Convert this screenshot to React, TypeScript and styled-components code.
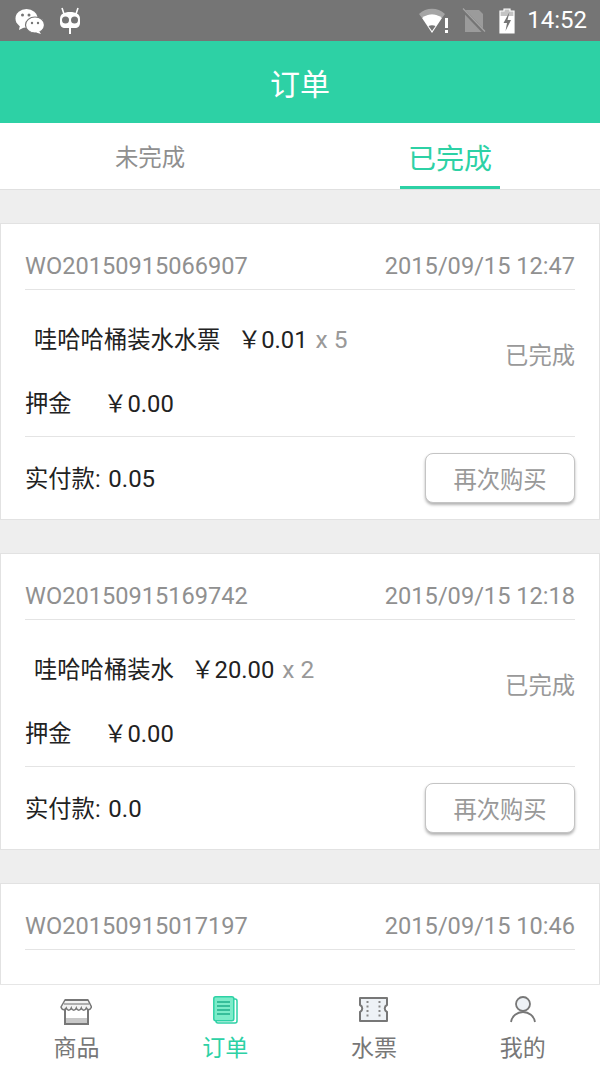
import { createGlobalStyle, styled } from "styled-components"

const GREEN = "#2dd1a5"
const BAR = "#757575"

const orders = [
  { no: "WO20150915066907", date: "2015/09/15 12:47", name: "哇哈哈桶装水水票", price: "￥0.01", qty: "x 5", paid: "0.05" },
  { no: "WO20150915169742", date: "2015/09/15 12:18", name: "哇哈哈桶装水", price: "￥20.00", qty: "x 2", paid: "0.0" },
]

export default function App() {
  return (
    <SPage>
      <GlobalStyle />
      <SStatusBar>
        <SStatusGroup>
          <WechatIcon />
          <RobotIcon />
        </SStatusGroup>
        <SStatusGroup>
          <WifiIcon />
          <SimIcon />
          <BatteryIcon />
          <SClock>14:52</SClock>
        </SStatusGroup>
      </SStatusBar>
      <SHeader>订单</SHeader>
      <STabs>
        <STab>未完成</STab>
        <STab $active>已完成<STabLine /></STab>
      </STabs>
      <SList>
        {orders.map((order) => (
          <SCard key={order.no}>
            <SCardHead>
              <span>{order.no}</span>
              <span>{order.date}</span>
            </SCardHead>
            <SBody>
              <SBodyLeft>
                <SItem>
                  <span>{order.name}</span>
                  <SPrice>{order.price}</SPrice>
                  <SQty>{order.qty}</SQty>
                </SItem>
                <SDeposit>
                  <span>押金</span>
                  <SLatin>￥0.00</SLatin>
                </SDeposit>
              </SBodyLeft>
              <SState>已完成</SState>
            </SBody>
            <SFoot>
              <SPaid>实付款: <SPaidValue>{order.paid}</SPaidValue></SPaid>
              <SButton>再次购买</SButton>
            </SFoot>
          </SCard>
        ))}
        <SCard>
          <SCardHead>
            <span>WO20150915017197</span>
            <span>2015/09/15 10:46</span>
          </SCardHead>
        </SCard>
      </SList>
      <SNav>
        <SNavItem><ShopIcon />商品</SNavItem>
        <SNavItem $active><OrderIcon />订单</SNavItem>
        <SNavItem><TicketIcon />水票</SNavItem>
        <SNavItem><UserIcon />我的</SNavItem>
      </SNav>
    </SPage>
  )
}

function WechatIcon() {
  return (
    <svg width="30" height="28" viewBox="0 0 30 28">
      <ellipse cx="11.500" cy="12.500" rx="11" ry="9.500" fill="#fff" />
      <path d="M5 19l-1 5 6-3z" fill="#fff" />
      <ellipse cx="20" cy="19" rx="9.500" ry="8" fill="#fff" stroke={BAR} strokeWidth="1.200" />
      <path d="M24 25l2 3-5-1.500z" fill="#fff" />
      <circle cx="7.500" cy="9" r="1.500" fill={BAR} />
      <circle cx="14" cy="9" r="1.500" fill={BAR} />
      <circle cx="17" cy="17" r="1.200" fill={BAR} />
      <circle cx="23" cy="17" r="1.200" fill={BAR} />
    </svg>
  )
}

function RobotIcon() {
  return (
    <svg width="22" height="28" viewBox="0 0 22 28">
      <path d="M3 2l2 6M19 2l-2 6" stroke="#fff" strokeWidth="1.600" />
      <path d="M1 13c0-5 4-7 10-7s10 2 10 7v4c0 3-2 5-5 5H6c-3 0-5-2-5-5z" fill="#fff" />
      <circle cx="6.500" cy="14" r="3.500" fill={BAR} />
      <circle cx="15.500" cy="14" r="3.500" fill={BAR} />
      <rect x="10" y="22" width="2" height="6" fill="#fff" />
    </svg>
  )
}

function WifiIcon() {
  return (
    <svg width="32" height="28" viewBox="0 0 32 28">
      <path d="M1 8C8 1 20 1 27 8l-3 4C18 7 10 7 4 12z" fill="#a5a5a5" />
      <path d="M4 12c6-5 14-5 20 0L14 27z" fill="#fff" />
      <path d="M14 25l-3.500-5c2-1 5-1 7 0z" fill={BAR} />
      <rect x="27" y="12" width="3" height="10" fill="#fff" />
      <rect x="27" y="24" width="3" height="3" fill="#fff" />
    </svg>
  )
}

function SimIcon() {
  return (
    <svg width="26" height="28" viewBox="0 0 26 28">
      <path d="M4 4h14l4 4v18H4z" fill="#9b9b9b" />
      <path d="M1 3l22 23" stroke={BAR} strokeWidth="3.500" />
      <path d="M2 2.500l22 23" stroke="#a5a5a5" strokeWidth="1.200" />
    </svg>
  )
}

function BatteryIcon() {
  return (
    <svg width="18" height="28" viewBox="0 0 18 28">
      <path d="M6 3h6v2h4v22H2V5h4z" fill="#c4c4c4" stroke="#fff" strokeWidth="1.200" />
      <rect x="2" y="10" width="14" height="17" fill="#fff" />
      <path d="M11.500 6L5.500 17h3.500L7.500 25l5.500-11H9.500z" fill={BAR} />
    </svg>
  )
}

function ShopIcon() {
  return (
    <svg width="32" height="32" viewBox="0 0 32 32">
      <rect x="5" y="24" width="23" height="6" fill="#c8c8c8" />
      <path d="M5 15v15h23V15" fill="none" stroke="#777" strokeWidth="2" />
      <path d="M5 6h23l3.500 7c-2 4-4 3-5.200 1-1 3-4 3-5 0-1 3-4 3-5 0-1 3-4 3-5 0-1 3-4 3-5 0-1.200 2-3.800 3-5.300-1z" fill="#f2f2f2" stroke="#777" strokeWidth="1.500" />
      <path d="M5 6h23" stroke="#777" strokeWidth="2" />
      <path d="M4 10h25" stroke="#999" strokeWidth="1.500" />
    </svg>
  )
}

function OrderIcon() {
  return (
    <svg width="32" height="32" viewBox="0 0 32 32">
      <rect x="7" y="5" width="21" height="24" rx="2" fill="#fff" stroke={GREEN} strokeWidth="1.500" />
      <rect x="4.800" y="2.800" width="20" height="24" rx="2" fill="#7cecc9" stroke={GREEN} strokeWidth="1.500" />
      <path d="M8 8h13M8 12h13M8 16h13M8 20h13" stroke="#1fae8a" strokeWidth="1.500" />
    </svg>
  )
}

function TicketIcon() {
  return (
    <svg width="32" height="32" viewBox="0 0 32 32">
      <path d="M2 4h27v7c-3 1.500-3 5.500 0 7v9H2v-9c3-1.500 3-5.500 0-7z" fill="#eef2f6" stroke="#777" strokeWidth="2" strokeLinejoin="round" />
      <path d="M9.500 7v17M21.500 7v17" stroke="#888" strokeWidth="2" strokeDasharray="2 2.500" />
    </svg>
  )
}

function UserIcon() {
  return (
    <svg width="32" height="32" viewBox="0 0 32 32">
      <circle cx="16" cy="10" r="7" fill="#eef2f6" stroke="#777" strokeWidth="1.800" />
      <path d="M4 28c1-6 6-10 12-10s11 4 12 10" fill="none" stroke="#777" strokeWidth="1.800" />
    </svg>
  )
}

const GlobalStyle = createGlobalStyle`
  html, body {
    margin: 0;
    padding: 0;
    background: #eeeeee;
  }
  body {
    font-family: Roboto, "Noto Sans CJK SC", sans-serif;
  }
`

const SPage = styled.div`
  width: 600px;
  height: 1067px;
  display: flex;
  flex-direction: column;
  overflow: hidden;
`
const SStatusBar = styled.div`
  height: 41px;
  flex: none;
  box-sizing: border-box;
  background: ${BAR};
  display: flex;
  justify-content: space-between;
  align-items: center;
  padding: 0 13px 1px 15px;
`
const SStatusGroup = styled.div`
  display: flex;
  align-items: center;
  gap: 14px;
  &:last-child {
    gap: 11px;
  }
`
const SClock = styled.span`
  color: #fff;
  font-size: 24px;
`
const SHeader = styled.div`
  height: 82px;
  flex: none;
  background: ${GREEN};
  color: #fff;
  font-size: 30px;
  display: flex;
  align-items: center;
  justify-content: center;
`
const STabs = styled.div`
  height: 67px;
  flex: none;
  display: grid;
  grid-template-columns: 1fr 1fr;
  background: #fff;
  border-bottom: 1px solid #e0e0e0;
  box-sizing: border-box;
`
const STab = styled.div<{ $active?: boolean }>`
  position: relative;
  display: flex;
  align-items: center;
  justify-content: center;
  padding: ${(p) => (p.$active ? "1px 0 0" : "0")};
  font-size: ${(p) => (p.$active ? "28px" : "23.400px")};
  color: ${(p) => (p.$active ? GREEN : "#8f8f8f")};
`
const STabLine = styled.i`
  position: absolute;
  bottom: 0;
  left: 100px;
  width: 100px;
  height: 3px;
  background: ${GREEN};
`
const SList = styled.div`
  flex: 1;
  min-height: 0;
  overflow: hidden;
  padding-top: 33px;
  display: flex;
  flex-direction: column;
  gap: 33px;
`
const SCard = styled.div`
  flex: none;
  box-sizing: border-box;
  background: #fff;
  border: 1px solid #e2e2e2;
  padding: 0 24px;
  &:last-child {
    height: 200px;
  }
`
const SCardHead = styled.div`
  height: 66px;
  box-sizing: border-box;
  display: flex;
  justify-content: space-between;
  align-items: flex-end;
  padding-bottom: 8px;
  border-bottom: 1px solid #e4e4e4;
  font-size: 23.600px;
  line-height: 30px;
  color: #909090;
`
const SBody = styled.div`
  height: 147px;
  box-sizing: border-box;
  display: flex;
  justify-content: space-between;
  border-bottom: 1px solid #e4e4e4;
`
const SBodyLeft = styled.div`
  display: flex;
  flex-direction: column;
`
const SItem = styled.div`
  display: flex;
  align-items: baseline;
  height: 34px;
  margin-top: 30px;
  padding-left: 9px;
  font-size: 23.300px;
  color: #222;
`
const SLatin = styled.span`
  font-size: 23.800px;
`
const SPrice = styled(SLatin)`
  margin-left: 17px;
`
const SQty = styled.span`
  margin-left: 8px;
  font-size: 24.500px;
  color: #999;
`
const SDeposit = styled.div`
  display: flex;
  align-items: baseline;
  height: 34px;
  margin-top: 30px;
  gap: 32px;
  font-size: 23.300px;
  color: #222;
`
const SState = styled.div`
  align-self: flex-start;
  margin-top: 47px;
  font-size: 23.300px;
  color: #999;
`
const SFoot = styled.div`
  height: 82px;
  display: flex;
  justify-content: space-between;
  align-items: center;
  font-size: 23.300px;
  color: #222;
`
const SPaid = styled.span`
  margin-bottom: 2px;
`
const SPaidValue = styled.span`
  margin-left: 2px;
  font-size: 24px;
`
const SButton = styled.button`
  width: 150px;
  height: 50px;
  box-sizing: border-box;
  padding: 0;
  border: 1px solid #c4c4c4;
  border-radius: 8px;
  background: #fff;
  box-shadow: 0 2px 3px rgba(0, 0, 0, 0.3);
  font: inherit;
  font-size: 23.300px;
  color: #999;
`
const SNav = styled.div`
  height: 83px;
  flex: none;
  display: grid;
  grid-template-columns: repeat(4, 1fr);
  background: #fff;
  border-top: 1px solid #e6e6e6;
  padding: 9px 3px 0 2px;
  box-sizing: border-box;
`
const SNavItem = styled.div<{ $active?: boolean }>`
  display: flex;
  flex-direction: column;
  align-items: center;
  gap: 7px;
  font-size: 23px;
  line-height: 32px;
  color: ${(p) => (p.$active ? GREEN : "#777")};
`
